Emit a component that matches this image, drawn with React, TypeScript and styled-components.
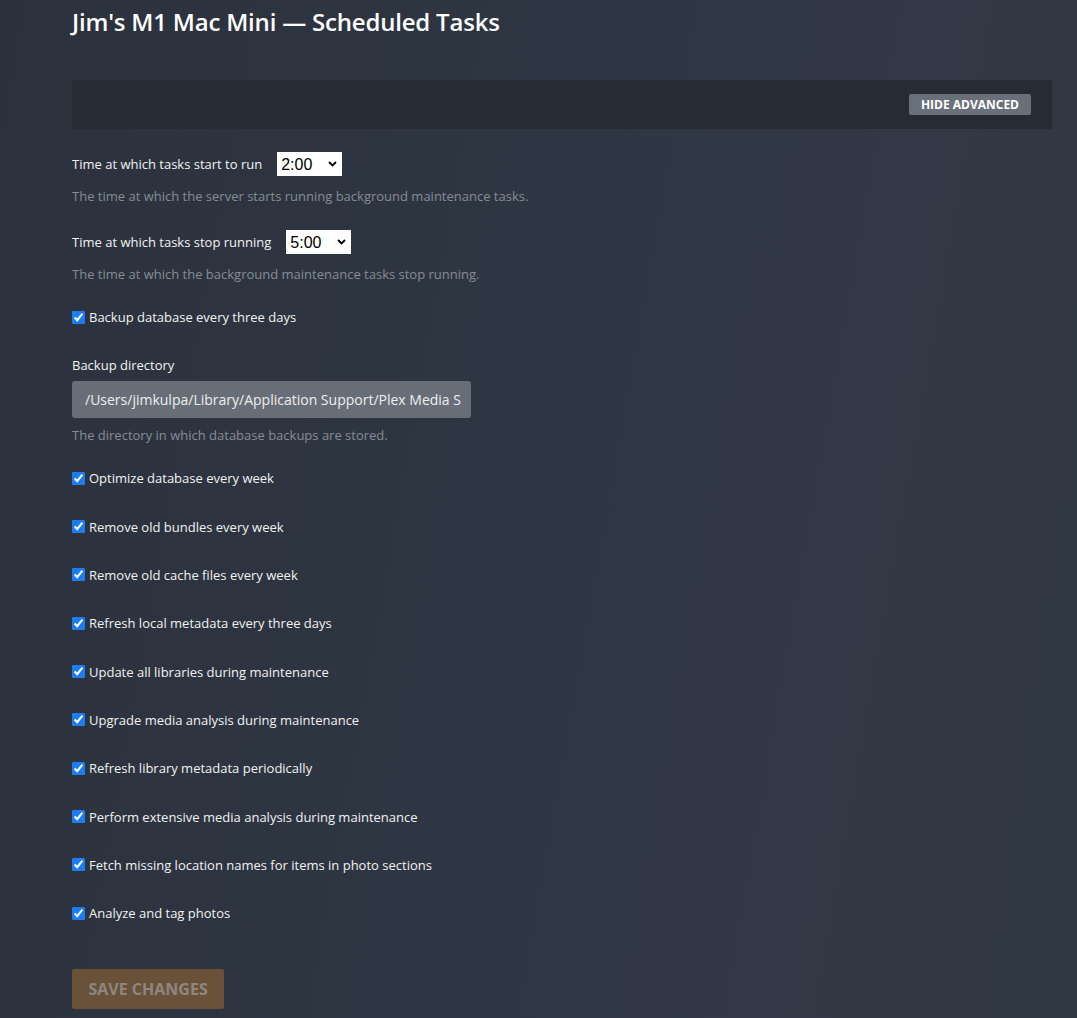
import * as React from "react";
import styled, { createGlobalStyle } from "styled-components";

const GlobalStyle = createGlobalStyle`
  html, body {
    margin: 0;
    padding: 0;
    min-height: 100%;
  }
  body {
    background: linear-gradient(100deg, #2b323d 0%, #2f3643 45%, #323845 75%, #303843 100%);
    font-family: "Open Sans", "Liberation Sans", sans-serif;
    color: #eeeeee;
  }
`;

const Page = styled.div`
  padding: 6px 25px 20px 72px;
  min-height: 1018px;
  box-sizing: border-box;
`;

const Title = styled.h1`
  margin: 0;
  font-size: 24px;
  line-height: 32px;
  font-weight: 600;
  color: #ffffff;
  letter-spacing: -0.2px;
`;

const Toolbar = styled.div`
  margin-top: 42px;
  height: 49px;
  background: #262b34;
  display: flex;
  align-items: center;
  justify-content: flex-end;
  padding-right: 21px;
`;

const SmallButton = styled.button`
  height: 21px;
  padding: 0 12px;
  border: none;
  border-radius: 2px;
  background: #6a707a;
  color: #ffffff;
  font-family: "Open Sans", "Liberation Sans", sans-serif;
  font-size: 12px;
  font-weight: 700;
  text-transform: uppercase;
  cursor: pointer;
`;

const Form = styled.form`
  margin-top: 22px;
  display: flex;
  flex-direction: column;
  align-items: flex-start;
`;

const Group = styled.div`
  margin-bottom: 24px;
`;

const SelectRow = styled.div`
  height: 26px;
  display: flex;
  align-items: center;
  gap: 15px;
`;

const Label = styled.label`
  font-size: 13px;
  line-height: 20px;
  color: #f2f2f2;
  display: block;
`;

const SelectWrap = styled.div`
  position: relative;
  display: inline-block;
`;

const Select = styled.select`
  appearance: none;
  -webkit-appearance: none;
  height: 24px;
  padding: 0 20px 0 4px;
  background: #ffffff;
  color: #000000;
  border: none;
  border-radius: 0;
  font-family: "Liberation Sans", Arial, sans-serif;
  font-size: 16px;
  outline: none;
`;

const Chevron = styled.svg`
  position: absolute;
  right: 5px;
  top: 9px;
  pointer-events: none;
`;

const Help = styled.div`
  margin-top: 10px;
  font-size: 13px;
  line-height: 18px;
  color: #868c95;
`;

const CheckRow = styled.label`
  height: 20px;
  margin-bottom: 28.33px;
  display: flex;
  align-items: center;
  font-size: 13px;
  color: #f2f2f2;
`;

const Check = styled.input`
  width: 13px;
  height: 13px;
  margin: 0 4px 0 0;
  accent-color: #1c7cf4;
`;

const DirLabel = styled(Label)`
  margin-bottom: 6px;
`;

const TextInput = styled.input`
  width: 399px;
  height: 37px;
  box-sizing: border-box;
  padding: 0 10px 0 13px;
  border: none;
  border-radius: 3px;
  background: #686e78;
  color: #eeeeee;
  font-family: "Open Sans", "Liberation Sans", sans-serif;
  font-size: 14px;
  outline: none;
`;

const DirHelp = styled(Help)`
  margin-top: 8px;
`;

const SaveButton = styled.button`
  margin-top: 17.67px;
  height: 40px;
  padding: 0 16.5px;
  border: none;
  border-radius: 2px;
  background: #6a5139;
  color: #8d8781;
  font-family: "Open Sans", "Liberation Sans", sans-serif;
  font-size: 16px;
  font-weight: 700;
  text-transform: uppercase;
`;

const hours = Array.from({ length: 24 }, (_, i) => `${i}:00`);

const TimeSelect = ({ value }: { value: string }): JSX.Element => (
  <SelectWrap>
    <Select defaultValue={value}>
      {hours.map((h) => (
        <option key={h} value={h}>
          {h}
        </option>
      ))}
    </Select>
    <Chevron width="9" height="6" viewBox="0 0 9 6">
      <path d="M1 1l3.5 3.5L8 1" fill="none" stroke="#000" strokeWidth="1.8" />
    </Chevron>
  </SelectWrap>
);

const checks = [
  "Optimize database every week",
  "Remove old bundles every week",
  "Remove old cache files every week",
  "Refresh local metadata every three days",
  "Update all libraries during maintenance",
  "Upgrade media analysis during maintenance",
  "Refresh library metadata periodically",
  "Perform extensive media analysis during maintenance",
  "Fetch missing location names for items in photo sections",
  "Analyze and tag photos",
];

const CheckItem = ({ text }: { text: string }): JSX.Element => (
  <CheckRow>
    <Check type="checkbox" defaultChecked />
    {text}
  </CheckRow>
);

export default function App(): JSX.Element {
  return (
    <>
      <GlobalStyle />
      <Page>
        <Title>Jim's M1 Mac Mini — Scheduled Tasks</Title>
        <Toolbar>
          <SmallButton type="button">Hide Advanced</SmallButton>
        </Toolbar>
        <Form onSubmit={(e) => e.preventDefault()}>
          <Group>
            <SelectRow>
              <Label>Time at which tasks start to run</Label>
              <TimeSelect value="2:00" />
            </SelectRow>
            <Help>The time at which the server starts running background maintenance tasks.</Help>
          </Group>
          <Group>
            <SelectRow>
              <Label>Time at which tasks stop running</Label>
              <TimeSelect value="5:00" />
            </SelectRow>
            <Help>The time at which the background maintenance tasks stop running.</Help>
          </Group>
          <CheckItem text="Backup database every three days" />
          <Group>
            <DirLabel>Backup directory</DirLabel>
            <TextInput
              type="text"
              defaultValue="/Users/jimkulpa/Library/Application Support/Plex Media Server/Plug-in Support/Databases"
            />
            <DirHelp>The directory in which database backups are stored.</DirHelp>
          </Group>
          {checks.map((c) => (
            <CheckItem key={c} text={c} />
          ))}
          <SaveButton type="submit" disabled>
            Save Changes
          </SaveButton>
        </Form>
      </Page>
    </>
  );
}
